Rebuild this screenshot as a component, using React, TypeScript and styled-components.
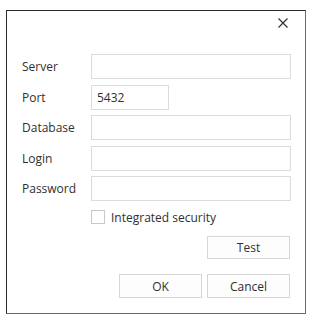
import React from "react";
import styled, { createGlobalStyle } from "styled-components";

const Global = createGlobalStyle`
  html, body { margin: 0; padding: 0; background: #ffffff; }
  body { font-family: "Open Sans", "Noto Sans", sans-serif; }
  * { box-sizing: border-box; }
`;

const Dialog = styled.div`
  margin: 10px 0 0 6px;
  width: 300px;
  height: 304px;
  border: 1px solid #2b2b2b;
  border-right-color: #6a6a6a;
  border-bottom-color: #6a6a6a;
  background: #ffffff;
  display: flex;
  flex-direction: column;
  padding: 0 14px 0 15px;
  color: #333333;
  font-size: 12px;
`;

const Header = styled.div`
  height: 43px;
  display: flex;
  justify-content: flex-end;
  align-items: flex-start;
  padding-top: 2px;
`;

const CloseButton = styled.button`
  width: 20px;
  height: 20px;
  margin-right: -2px;
  border: none;
  background: transparent;
  padding: 0;
  display: flex;
  align-items: center;
  justify-content: center;
  cursor: pointer;
`;

const Form = styled.div`
  display: grid;
  grid-template-columns: 69px 1fr;
  grid-auto-rows: 25px;
  row-gap: 5.5px;
  align-items: center;
`;

const Label = styled.label`
  font-size: 12px;
  color: #303030;
  line-height: 25px;
`;

const Input = styled.input<{ $narrow?: boolean }>`
  width: ${(p) => (p.$narrow ? "78px" : "200px")};
  height: 25px;
  border: 1px solid #dcdcdc;
  background: #ffffff;
  padding: 0 5px;
  font-family: inherit;
  font-size: 12px;
  color: #303030;
  outline: none;
`;

const CheckRow = styled.label`
  display: flex;
  align-items: center;
  gap: 6px;
  margin: 8px 0 0 69px;
  height: 16px;
  font-size: 12px;
  color: #303030;
`;

const CheckBox = styled.span`
  width: 14px;
  height: 14px;
  border: 1px solid #c8c8c8;
  background: #ffffff;
  display: inline-block;
`;

const ButtonRow = styled.div<{ $top: number }>`
  display: flex;
  justify-content: flex-end;
  gap: 5px;
  margin-top: ${(p) => p.$top}px;
  padding-right: 1px;
`;

const Button = styled.button<{ $h?: number }>`
  width: 83px;
  height: ${(p) => p.$h ?? 24}px;
  border: 1px solid #d6d6d6;
  background: #fdfdfd;
  font-family: inherit;
  font-size: 12px;
  color: #303030;
  padding: 0;
  cursor: pointer;
`;

export default function App() {
  return (
    <>
      <Global />
      <Dialog>
        <Header>
          <CloseButton aria-label="Close">
            <svg width="10" height="10" viewBox="0 0 10 10">
              <path d="M0.5 0.5 L9.5 9.5 M9.5 0.5 L0.5 9.5" stroke="#333" strokeWidth="1.2" />
            </svg>
          </CloseButton>
        </Header>
        <Form>
          <Label>Server</Label>
          <Input />
          <Label>Port</Label>
          <Input $narrow defaultValue="5432" />
          <Label>Database</Label>
          <Input />
          <Label>Login</Label>
          <Input />
          <Label>Password</Label>
          <Input type="password" />
        </Form>
        <CheckRow>
          <CheckBox />
          Integrated security
        </CheckRow>
        <ButtonRow $top={11}>
          <Button $h={23}>Test</Button>
        </ButtonRow>
        <ButtonRow $top={15}>
          <Button>OK</Button>
          <Button>Cancel</Button>
        </ButtonRow>
      </Dialog>
    </>
  );
}
